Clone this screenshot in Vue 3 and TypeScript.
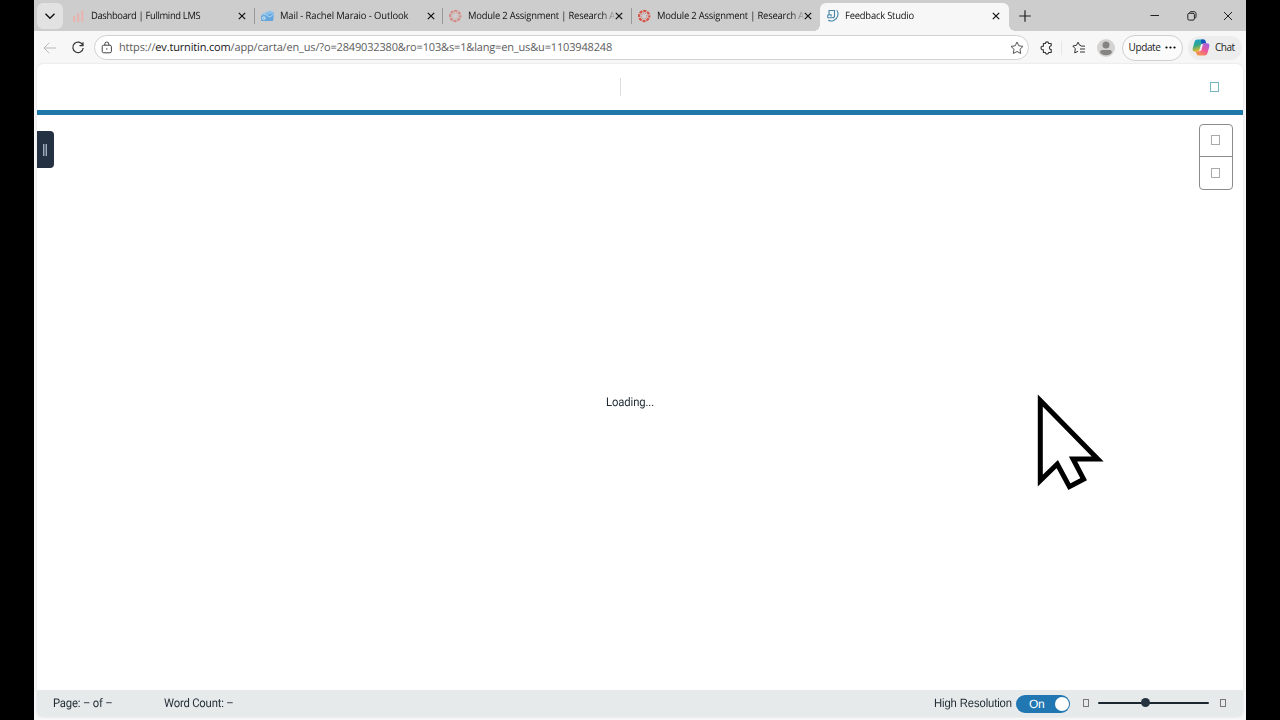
<script setup lang="ts">
interface Tab {
  title: string
  icon: 'bars' | 'mail' | 'canvas' | 'studio'
  faded?: boolean
  active?: boolean
  spacing: string
}

const tabs: Tab[] = [
  { title: 'Dashboard | Fullmind LMS', icon: 'bars', spacing: 't1' },
  { title: 'Mail - Rachel Maraio - Outlook', icon: 'mail', spacing: 't2' },
  { title: 'Module 2 Assignment | Research A', icon: 'canvas', faded: true, spacing: 't3' },
  { title: 'Module 2 Assignment | Research A', icon: 'canvas', spacing: 't3' },
  { title: 'Feedback Studio', icon: 'studio', active: true, spacing: 't5' },
]
</script>

<template>
  <div class="screen">
    <div class="browser">
      <header class="tabstrip">
        <button class="tab-menu" aria-label="Tab actions">
          <svg width="12" height="8" viewBox="0 0 12 8"><path d="M1.5 1.8 6 6.2 10.5 1.8" fill="none" stroke="#111" stroke-width="1.4" /></svg>
        </button>
        <div class="tabs">
          <div v-for="(tab, i) in tabs" :key="i" class="tab" :class="{ active: tab.active, divided: i < 3 }">
            <svg class="favicon" :class="{ faded: tab.faded }" width="14" height="14" viewBox="0 0 14 14">
              <g v-if="tab.icon === 'bars'" fill="#e5b6b2">
                <rect x="1" y="7" width="2.3" height="6" /><rect x="5" y="4.5" width="2.3" height="8.5" /><rect x="9" y="1.5" width="2.3" height="11.5" />
              </g>
              <g v-else-if="tab.icon === 'mail'">
                <path d="M1 5 9 1.5l4 2-1 8.5H3z" fill="#8bc0ea" />
                <path d="M3 6 12.8 4.5 12 12H5z" fill="#65a6df" />
                <path d="m3 5 6 3 3.6-3" fill="none" stroke="#b4d9f4" />
                <rect x="0" y="6.3" width="5.7" height="5.7" rx="1" fill="#68a7da" /><circle cx="2.8" cy="9.1" r="1.3" fill="none" stroke="#e2f0fa" stroke-width=".9" />
              </g>
              <g v-else-if="tab.icon === 'canvas'" fill="none" stroke="#d95449">
                <circle cx="6.2" cy="7" r="5.1" stroke-width="2.2" stroke-dasharray="3.1 .905" stroke-dashoffset="1.55" />
                <circle cx="6.2" cy="7" r="2.9" stroke-width="1" stroke-dasharray=".8 1.478" stroke-dashoffset="-.8" />
              </g>
              <g v-else fill="none" stroke="#4385a8" stroke-width="1.1" stroke-linecap="round">
                <path d="M3 1.5h5.5v5.2c0 1.4-.7 2-2 2H2M3 1.5v3.8M2 8.7c-.8-1.8-.4-3 1.2-3h1.9v1.4" />
                <path d="M11 1.5c2.2 2.8.8 8.4-3.2 10-2 .8-4 .6-5.2-.2" />
              </g>
            </svg>
            <div class="title-box"><span class="tab-title" :class="tab.spacing">{{ tab.title }}</span></div>
            <svg class="close" width="8" height="8" viewBox="0 0 8 8"><path d="m.8.8 6.4 6.4m0-6.4L.8 7.2" stroke="#111" stroke-width="1.2" /></svg>
          </div>
        </div>
        <svg class="new-tab" width="12" height="12" viewBox="0 0 12 12"><path d="M6 .2v11.6M.2 6h11.6" stroke="#222" stroke-width="1.2" /></svg>
        <div class="window-controls">
          <svg width="10" height="10" viewBox="0 0 10 10"><path d="M.5 4.5h8.5" stroke="#222" /></svg>
          <svg width="10" height="10" viewBox="0 0 10 10" fill="none" stroke="#222"><rect x=".8" y="2.3" width="6.6" height="6.8" rx="1.4" /><path d="M2.6 2.1C2.6 1.2 3 .7 4 .7h3c1.3 0 2 .7 2 2v3c0 1-.5 1.5-1.4 1.5" /></svg>
          <svg width="10" height="10" viewBox="0 0 10 10"><path d="m1 1 8 8m0-8L1 9" stroke="#222" /></svg>
        </div>
      </header>

      <nav class="toolbar">
        <svg class="back" width="14" height="12" viewBox="0 0 14 12"><path d="M6.3.8 1 6l5.3 5.2M1 6h12" fill="none" stroke="#b9b9b9" /></svg>
        <svg class="reload" width="14" height="14" viewBox="0 0 14 14" fill="none" stroke="#333" stroke-width="1.2"><path d="M11.8 4.2A5.2 5.2 0 1 0 12.2 7M12 1.2v3.4H8.5" /></svg>
        <div class="address">
          <svg class="lock" width="12" height="13" viewBox="0 0 12 13" fill="none" stroke="#444"><rect x="1.2" y="4.2" width="9.2" height="7.6" rx="1.5" /><path d="M3.8 4.2V3a2 2 0 0 1 4 0v1.2" /><circle cx="5.8" cy="8" r=".7" fill="#444" stroke="none" /></svg>
          <span class="url"><span>https://</span><b>ev.turnitin.com</b><span>/app/carta/en_us/?o=2849032380&amp;ro=103&amp;s=1&amp;lang=en_us&amp;u=1103948248</span></span>
          <svg class="star" width="14" height="14" viewBox="0 0 14 14"><path d="m7 1 1.8 3.8 4.2.6-3 2.9.7 4.2L7 10.5l-3.7 2 .7-4.2-3-2.9 4.2-.6z" fill="none" stroke="#555" stroke-linejoin="round" /></svg>
        </div>
        <svg class="puzzle" width="14" height="14" viewBox="0 0 14 14"><path d="M3.4 2.5h2a1.6 1.6 0 0 1 3.2 0h2.6v2.3c-2.4.4-2.4 3.4 0 3.8v2.9H8.6a1.6 1.6 0 0 1-3.2 0h-2V8.7a1.8 1.8 0 1 1 0-3.4z" fill="none" stroke="#333" stroke-width="1.1" stroke-linejoin="round" /></svg>
        <i class="tool-divider"></i>
        <svg class="favorites" width="14" height="14" viewBox="0 0 14 14" fill="none" stroke="#333" stroke-linejoin="round"><path d="M9 4.5 7.6 4.2 6 1.2 4.4 4.3.8 5l2.5 2.7-.6 4.2L6 10.3M8.8 5.1H13M8 8h5M8 11h5" /></svg>
        <svg class="avatar" width="18" height="18" viewBox="0 0 18 18"><circle cx="9" cy="9" r="9" fill="#d4d3d1" /><circle cx="9" cy="6" r="3.5" fill="#858483" /><path d="M3 13.3c0-2 1.5-2.4 3.2-2.4h5.6c1.7 0 3.2.5 3.2 2.4-1 1.7-3.2 3-6 3s-5-1.3-6-3z" fill="#858483" /></svg>
        <button class="update"><span>Update</span><svg width="11" height="3" viewBox="0 0 11 3"><circle cx="1.5" cy="1.5" r="1.1" /><circle cx="5.5" cy="1.5" r="1.1" /><circle cx="9.5" cy="1.5" r="1.1" /></svg></button>
        <button class="chat">
          <svg width="18" height="17" viewBox="0 0 18 17">
            <defs>
              <linearGradient id="cool" x1="0" y1="0" x2=".3" y2="1"><stop stop-color="#179fd5" /><stop offset=".5" stop-color="#30a68b" /><stop offset="1" stop-color="#f2bd22" /></linearGradient>
              <linearGradient id="warm" x1=".8" y1="0" x2=".2" y2="1"><stop stop-color="#a660e2" /><stop offset=".5" stop-color="#ef5a98" /><stop offset="1" stop-color="#f79a43" /></linearGradient>
            </defs>
            <path d="M5.5.5h6c1.5 0 1.8.9 2.3 2.5l.4 1.4h-2.8c-1.2 0-1.8.7-2.1 1.8L8.2 10c-.5 1.7-1 2.7-2.5 2.7H3C.9 12.7.2 11 .8 9l1.7-6C3 1.3 3.9.5 5.5.5z" fill="url(#cool)" />
            <path d="M9 .5h2.5c1.5 0 1.8.9 2.3 2.5l.4 1.4h-2.8c-1.2 0-1.7.4-2 1.4z" fill="#1756bd" />
            <path d="M12.5 16.5h-6c-1.5 0-1.8-.9-2.3-2.5l-.4-1.4h2.8c1.2 0 1.8-.7 2.1-1.8L9.8 7c.5-1.7 1-2.7 2.5-2.7H15c2.1 0 2.8 1.7 2.2 3.7l-1.7 6c-.5 1.7-1.4 2.5-3 2.5z" fill="url(#warm)" />
            <path d="m9 5.3-1.8 6.4h2L11 5.3z" fill="#f4f1f2" />
          </svg><span>Chat</span>
        </button>
      </nav>

      <main class="page">
        <div class="page-header"><i class="header-divider"></i><i class="glyph teal"></i></div>
        <div class="viewer">
          <div class="drawer"><i></i></div>
          <p class="loading">Loading...</p>
          <div class="side-tools"><div><i class="glyph"></i></div><div><i class="glyph"></i></div></div>
        </div>
        <footer class="statusbar">
          <span class="cell page-count"><span>Page: – of –</span></span>
          <span class="cell word-count"><span>Word Count: –</span></span>
          <span class="cell resolution"><span>High Resolution</span></span>
          <div class="toggle"><span>On</span><i></i></div>
          <i class="glyph small"></i>
          <div class="slider"><i></i></div>
          <i class="glyph small"></i>
        </footer>
      </main>
    </div>
    <svg class="pointer" width="70" height="100" viewBox="1036 392 70 100"><path d="M1040.3 400.5 1097.7 458.9H1073L1083.6 479.2 1069.4 486.6 1057.3 464 1040.3 480.5Z" fill="#fff" stroke="#000" stroke-width="5" stroke-miterlimit="8" /></svg>
  </div>
</template>

<style>
html, body { margin: 0; background: #000; overflow: hidden; }
</style>

<style scoped>
* { box-sizing: border-box; }
button { border: 0; padding: 0; margin: 0; font: inherit; color: inherit; }
svg { display: block; flex: none; }
.screen { position: relative; width: 1280px; height: 720px; background: #000; padding: 0 34px; overflow: hidden; }
.browser { width: 1212px; height: 720px; background: #f7f7f7; font-family: "Open Sans", "Noto Sans", sans-serif; display: flex; flex-direction: column; text-rendering: geometricPrecision; }
.tabstrip { height: 31px; background: #cdcdcd; display: flex; flex: none; }
.tab-menu { width: 26px; height: 26px; margin: 3px 3px 0; border-radius: 6px; background: #e2e2e2; display: grid; place-items: center; }
.tabs { display: flex; width: 943px; }
.tab { position: relative; width: 188.5px; height: 31px; padding: 1px 8px 0 6px; display: flex; align-items: center; }
.tab.divided::after { content: ""; position: absolute; right: 0; top: 8px; width: 1px; height: 16px; background: #999; }
.tab.active { background: #f7f7f7; height: 28px; margin-top: 3px; border-radius: 6px 6px 0 0; padding-top: 0; padding-bottom: 2px; }
.tab.active::before, .tab.active::after { content: ""; position: absolute; bottom: 0; width: 6px; height: 6px; }
.tab.active::before { left: -6px; background: radial-gradient(circle at 0 0, transparent 5.6px, #f7f7f7 6px); }
.tab.active::after { right: -6px; background: radial-gradient(circle at 100% 0, transparent 5.6px, #f7f7f7 6px); }
.favicon { margin-right: 5px; }
.favicon.faded { opacity: .55; }
.title-box { width: 147px; flex: none; padding-top: 2px; }
.tab-title { display: inline-block; vertical-align: top; white-space: nowrap; font-size: 10px; line-height: 18px; color: #111; transform: scaleX(.94); transform-origin: left; }
.t1 { letter-spacing: -.36px; }
.t2 { letter-spacing: -.11px; }
.t3 { letter-spacing: -.21px; -webkit-mask-image: linear-gradient(90deg, #000 142px, transparent 158px); mask-image: linear-gradient(90deg, #000 142px, transparent 158px); }
.t5 { letter-spacing: -.22px; }
.new-tab { margin: 10px 0 0 10px; }
.window-controls { display: flex; gap: 26.5px; margin: 11px 13px 0 auto; }
.toolbar { height: 33px; display: flex; align-items: center; flex: none; padding-left: 9px; background: #f7f7f7; }
.back { margin-right: 14px; }
.reload { margin-right: 9px; }
.address { width: 935px; height: 25px; border: 1px solid #d1d1d1; border-radius: 13px; background: #fff; display: flex; align-items: center; padding: 0 4px 0 6px; }
.lock { margin-right: 6px; }
.url { flex: 1; font-size: 11px; letter-spacing: -.155px; color: #5d5d5d; white-space: nowrap; line-height: 18px; }
.url b { font-weight: 400; color: #161616; }
.puzzle { margin-left: 11px; }
.tool-divider { width: 1px; height: 14px; background: #e7e7e7; margin: 0 9px 0 7px; }
.favorites { margin-left: 1px; }
.avatar { margin: 0 7px 0 11px; }
.update { width: 61px; height: 26px; border: 1px solid #cfcfcf; border-radius: 13px; background: #fbfbfb; display: flex; align-items: center; justify-content: center; gap: 5px; font-size: 10px; color: #222; letter-spacing: -.4px; }
.update span, .chat span { padding-bottom: 1px; }
.chat { width: 54px; height: 24px; border-radius: 12px; margin-left: 5px; background: #ededed; display: flex; align-items: center; padding-left: 4px; gap: 5px; font-size: 10px; letter-spacing: -.5px; color: #222; }
.page { width: 1206px; height: 653px; margin-left: 3px; background: #fff; border-radius: 6px; overflow: hidden; display: flex; flex-direction: column; font-family: Roboto, sans-serif; color: #1f2b34; box-shadow: 0 0 2px #d5d5d5; }
.page-header { height: 51px; border-bottom: 5px solid #2077aa; display: flex; align-items: center; padding: 0 24px 0 583px; }
.header-divider { width: 1px; height: 18px; background: #ddd; margin-right: auto; }
.glyph { width: 9px; height: 10px; border: 1px solid #aaa; display: block; flex: none; }
.glyph.teal { border-color: #65adb8; opacity: .9; }
.viewer { height: 575px; display: grid; grid-template-columns: 17px 1145px 44px; }
.drawer { width: 16.5px; height: 37px; margin-top: 16px; border-radius: 0 4px 4px 0; background: #243142; display: grid; place-items: center; }
.drawer i { width: 4px; height: 12px; border: solid #9faabd; border-width: 0 1px; background: #58667b; }
.loading { align-self: center; text-align: center; margin: 0; width: 1152px; font-size: 12px; line-height: 16px; letter-spacing: -.12px; transform: scaleX(.94); padding-bottom: 1px; }
.side-tools { width: 34px; height: 66px; margin-top: 9px; border: 1px solid #8c8c8c; border-radius: 4px; display: grid; grid-template-rows: 31px 33px; }
.side-tools div { display: grid; place-items: center; padding-right: 1px; }
.side-tools div:first-child { padding-bottom: 1px; }
.side-tools div + div { border-top: 1px solid #8c8c8c; }
.statusbar { height: 27px; background: #e7eaeb; display: flex; align-items: center; padding-left: 16px; font-size: 12px; white-space: nowrap; }
.cell { padding-bottom: 1px; }
.cell > span { display: inline-block; transform: scaleX(.94); transform-origin: left; letter-spacing: -.2px; }
.page-count { width: 110.5px; }
.word-count { width: 770.5px; }
.resolution { width: 82px; font-family: "Liberation Sans", Roboto, sans-serif; }
.resolution > span { letter-spacing: -.12px; }
.toggle { width: 54px; height: 18px; border-radius: 9px; background: #2077b1; color: #fff; display: flex; align-items: center; justify-content: space-between; padding: 0 1px 0 13px; font-family: "Liberation Sans", sans-serif; letter-spacing: -.3px; }
.toggle i { width: 14px; height: 14px; border-radius: 50%; background: #fff; }
.glyph.small { width: 6px; height: 8px; border-color: #777; margin-bottom: 1px; }
.toggle + .glyph { margin-left: 13px; }
.slider { position: relative; width: 111px; height: 2px; border-radius: 1px; background: #1c2630; margin: 0 11px 2px 9px; }
.slider i { position: absolute; left: 43px; top: -3.5px; width: 9px; height: 9px; border-radius: 50%; background: #263442; }
.pointer { position: absolute; left: 1036px; top: 392px; }
</style>
